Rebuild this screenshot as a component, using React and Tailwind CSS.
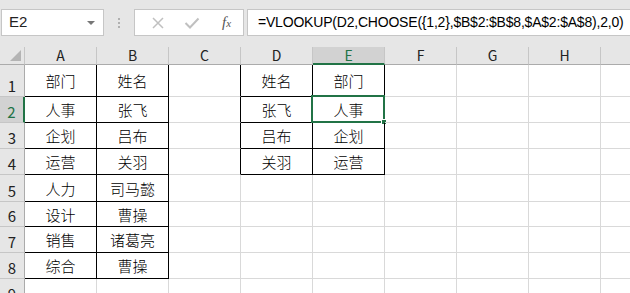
import { Fragment } from "react";

const cols = ["A", "B", "C", "D", "E", "F", "G", "H", "I"];
const rowHeights = [32, 26, 26, 26, 27, 25, 26, 26, 26];

const data = {
    A: ["部门", "人事", "企划", "运营", "人力", "设计", "销售", "综合"],
    B: ["姓名", "张飞", "吕布", "关羽", "司马懿", "曹操", "诸葛亮", "曹操"],
    D: ["姓名", "张飞", "吕布", "关羽"],
    E: ["部门", "人事", "企划", "运营"],
};

// boxed ranges drawn with black borders
const boxes = [
    { c0: 0, c1: 1, r0: 0, r1: 7 },
    { c0: 3, c1: 4, r0: 0, r1: 3 },
];

const inBox = (c, r) => boxes.some((b) => c >= b.c0 && c <= b.c1 && r >= b.r0 && r <= b.r1);

const font = { fontFamily: '"Noto Sans CJK SC", "Liberation Sans", sans-serif' };

function Cell({ c, r, h }) {
    const rightBlack = inBox(c, r) || inBox(c + 1, r);
    const bottomBlack = inBox(c, r) || inBox(c, r + 1);
    const text = data[cols[c]]?.[r] ?? "";
    const selected = c === 4 && r === 1;
    return (
        <div
            className={
                "relative flex items-center justify-center pt-[2px] border-r border-b text-[15px] font-light text-black " +
                (rightBlack ? "border-r-black " : "border-r-[#d9d9d9] ") +
                (bottomBlack ? "border-b-black" : "border-b-[#d9d9d9]")
            }
            style={{ height: h }}
        >
            {text}
            {selected && (
                <div className="absolute -left-[2px] -top-[2px] -right-[1px] -bottom-[1px] border-2 border-[#217346]">
                    <div className="absolute -right-[4px] -bottom-[4px] w-[6px] h-[6px] bg-[#217346] border border-white" />
                </div>
            )}
        </div>
    );
}

export default function App() {
    return (
        <div className="w-[630px] h-[293px] overflow-hidden bg-white" style={font}>
            <div className="h-[47px] bg-[#e6e6e6] flex items-start pt-[9px] pl-[1px]">
                <div className="shrink-0 w-[103px] h-[27px] bg-white border border-[#c6c6c6] flex items-center justify-between pl-[7px] pr-[8px]">
                    <span className="text-[15px] text-[#222]" style={{ fontFamily: '"Liberation Sans", sans-serif' }}>E2</span>
                    <span className="w-0 h-0 border-l-[4px] border-r-[4px] border-t-[4px] border-l-transparent border-r-transparent border-t-[#777]" />
                </div>
                <div className="shrink-0 w-[30px] h-[27px] flex flex-col items-center justify-center gap-[2px]">
                    <span className="w-[2px] h-[2px] bg-[#b0b0b0]" />
                    <span className="w-[2px] h-[2px] bg-[#b0b0b0]" />
                    <span className="w-[2px] h-[2px] bg-[#b0b0b0]" />
                </div>
                <div className="shrink-0 w-[110px] h-[27px] bg-white border border-[#c6c6c6] flex items-center">
                    <svg width="14" height="14" viewBox="0 0 14 14" className="ml-[16px]">
                        <path d="M2 2L12 12M12 2L2 12" stroke="#c0c0c0" strokeWidth="1.5" />
                    </svg>
                    <svg width="16" height="14" viewBox="0 0 16 14" className="ml-[19px]">
                        <path d="M1.5 7L6 11.5L14.5 2.5" stroke="#c0c0c0" strokeWidth="2" fill="none" />
                    </svg>
                    <span
                        className="ml-[22px] text-[15px] italic text-[#555]"
                        style={{ fontFamily: '"Liberation Serif", serif' }}
                    >
                        f<span className="text-[11px]">x</span>
                    </span>
                </div>
                <div
                    className="ml-[3px] min-w-0 flex-1 h-[27px] bg-white border border-r-0 border-[#c6c6c6] flex items-center pl-[10px] text-[14px] tracking-[-0.2px] text-black whitespace-nowrap overflow-hidden"
                    style={{ fontFamily: '"Liberation Sans", sans-serif' }}
                >
                    =VLOOKUP(D2,CHOOSE({"{"}1,2{"}"},$B$2:$B$8,$A$2:$A$8),2,0)
                </div>
            </div>

            <div className="grid" style={{ gridTemplateColumns: "25px repeat(9, 72px)" }}>
                <div className="h-[18px] bg-[#e6e6e6] border-r border-b border-r-[#c6c6c6] border-b-[#ababab] flex items-end justify-end">
                    <span className="w-0 h-0 mr-[3px] mb-[3px]" style={{ borderBottom: "11px solid #b4b4b4", borderLeft: "11px solid transparent" }} />
                </div>
                {cols.map((c) => (
                    <div
                        key={c}
                        className={
                            "h-[18px] flex items-center justify-center text-[14px] border-r border-r-[#c6c6c6] " +
                            (c === "E"
                                ? "bg-[#d2d2d2] text-[#217346] border-b-2 border-b-[#217346]"
                                : "bg-[#e6e6e6] text-[#222] border-b border-b-[#ababab]")
                        }
                    >
                        {c === "I" ? "" : c}
                    </div>
                ))}

                {rowHeights.map((h, r) => (
                    <Fragment key={r}>
                        <div
                            className={
                                "flex items-end justify-center text-[15px] leading-[20px] border-b border-b-[#c6c6c6] " +
                                (r === 1
                                    ? "bg-[#d2d2d2] text-[#217346] border-r-2 border-r-[#217346]"
                                    : "bg-[#e6e6e6] text-[#222] border-r border-r-[#ababab]")
                            }
                            style={{ height: h }}
                        >
                            {r + 1}
                        </div>
                        {cols.map((c, ci) => (
                            <Cell key={c} c={ci} r={r} h={h} />
                        ))}
                    </Fragment>
                ))}
            </div>
        </div>
    );
}
